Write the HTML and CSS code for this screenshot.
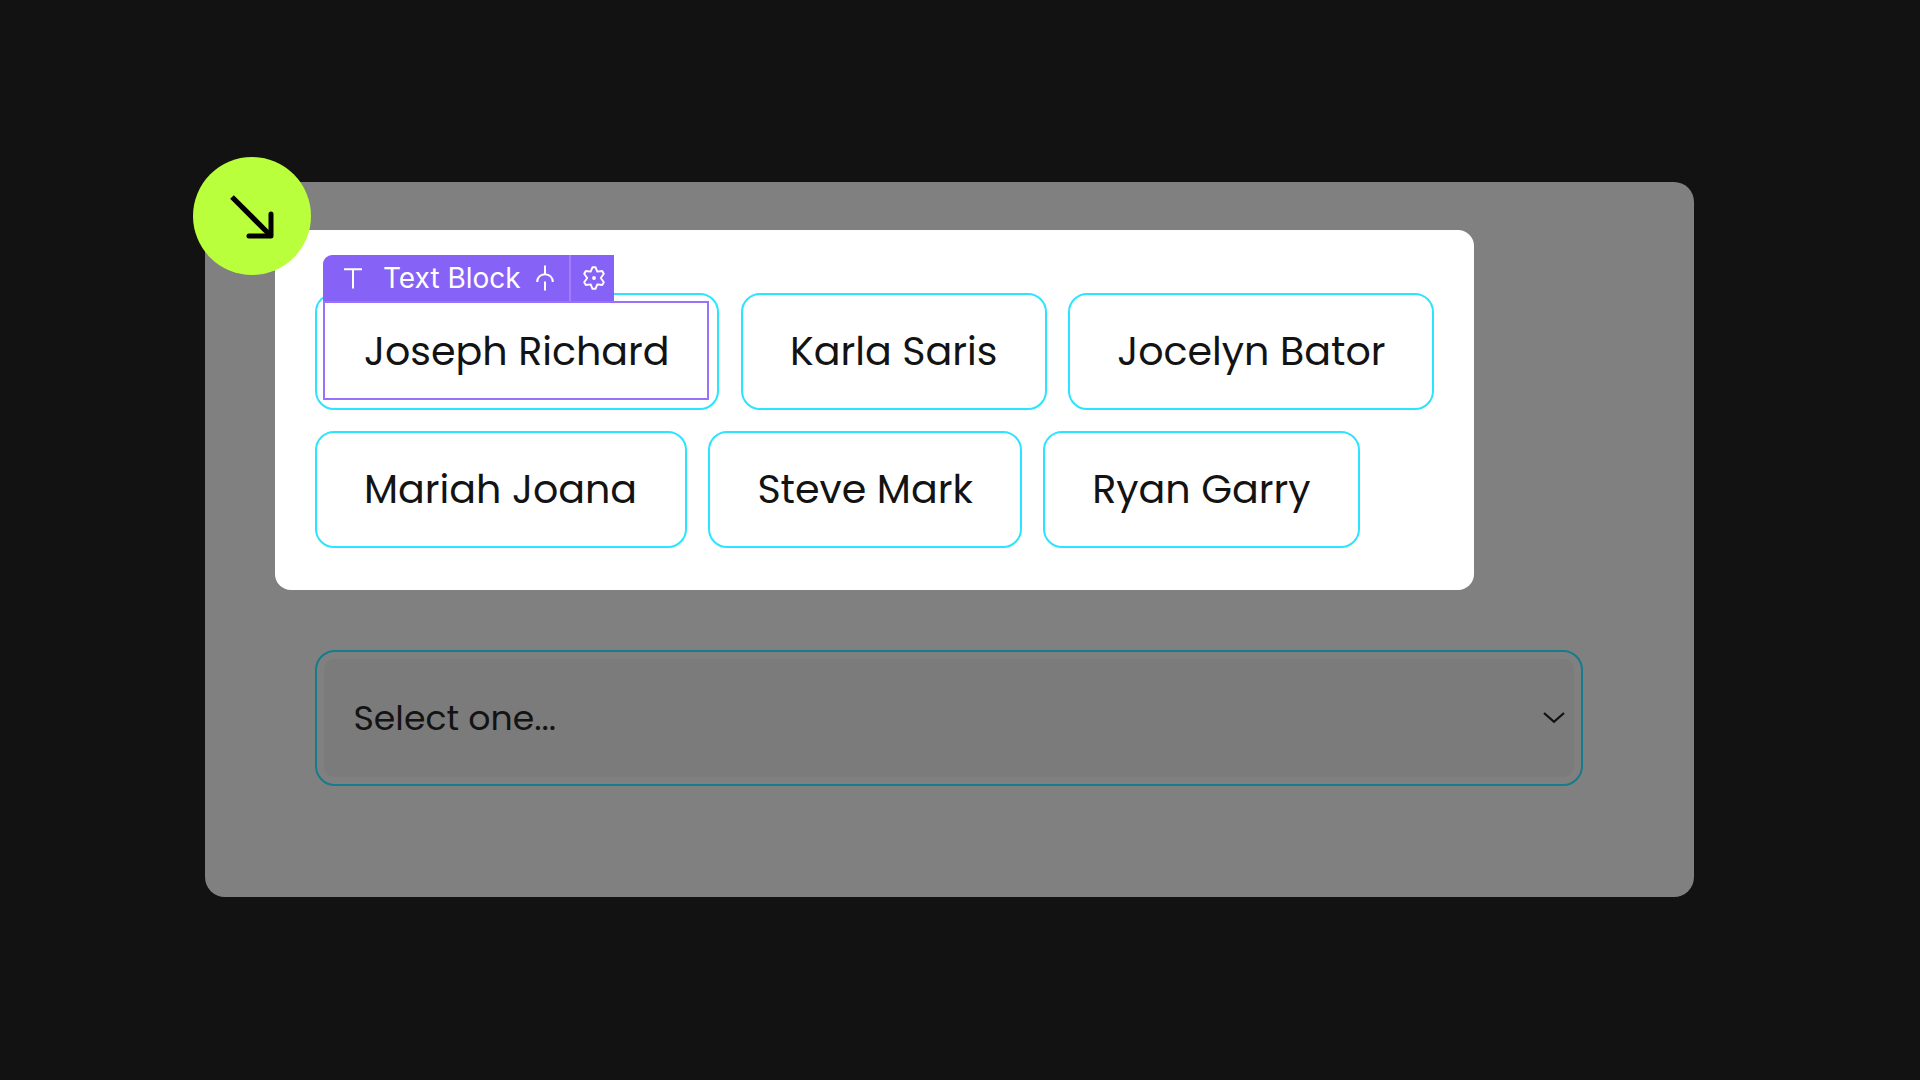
FILE: index.html
```html
<!DOCTYPE html>
<html lang="en">
<head>
  <meta charset="UTF-8">
  <title>Name Picker</title>
  <link rel="stylesheet" href="styles.css">
</head>
<body>
  <main class="panel">
    <!-- Corner badge -->
    <div class="badge">
      <svg viewBox="0 0 118 118" width="118" height="118" fill="none" stroke="#000">
        <path d="M39 40 L77 78" stroke-width="5.2"/>
        <path d="M56 79 H78 V57" stroke-width="5" stroke-linecap="round" stroke-linejoin="round"/>
      </svg>
    </div>

    <!-- Names -->
    <section class="card">
      <div class="chip chip-joseph">
        <div class="selection">
          <div class="tag">
            <div class="tag-label">
              <svg class="icon-t" viewBox="0 0 18 21" width="18" height="21" fill="none" stroke="#fff" stroke-width="2">
                <path d="M0 1.3 H18 M9 1.3 V20.5"/>
              </svg>
              <span>Text Block</span>
              <svg class="icon-link" viewBox="0 0 18 26" width="18" height="26" fill="none" stroke="#fff" stroke-width="2">
                <path d="M9 0.5 V9.5 M1.2 17 C1.2 12.5 4.5 9.2 9 9.2 C13.5 9.2 16.8 12.5 16.8 17 M9 16.5 V25.5"/>
              </svg>
            </div>
            <div class="tag-settings">
              <svg viewBox="0 0 22 24" width="22" height="24" fill="none" stroke="#fff" stroke-width="1.9" stroke-linejoin="round">
                <path d="M9.5 1.2 H12.5 L14.3 5.6 L19.2 5 L20.8 7.8 L17.8 12 L20.8 16.2 L19.2 19 L14.3 18.4 L12.5 22.8 H9.5 L7.7 18.4 L2.8 19 L1.2 16.2 L4.2 12 L1.2 7.8 L2.8 5 L7.7 5.6 Z"/>
                <circle cx="11" cy="12" r="1.9" fill="#fff" stroke="none"/>
              </svg>
            </div>
          </div>
          <span class="name">Joseph Richard</span>
        </div>
      </div>
      <div class="chip chip-karla"><span class="name">Karla Saris</span></div>
      <div class="chip chip-jocelyn"><span class="name">Jocelyn Bator</span></div>
      <div class="chip chip-mariah"><span class="name">Mariah Joana</span></div>
      <div class="chip chip-steve"><span class="name">Steve Mark</span></div>
      <div class="chip chip-ryan"><span class="name">Ryan Garry</span></div>
    </section>

    <!-- Dropdown -->
    <div class="select">
      <div class="select-field">
        <span class="select-text">Select one...</span>
        <svg viewBox="0 0 22 12" width="22" height="12" fill="none" stroke="#111" stroke-width="2.2">
          <path d="M1 1 L11 9.8 L21 1"/>
        </svg>
      </div>
    </div>
  </main>
</body>
</html>
```

FILE: styles.css
```css
/* Global Styles */
* {
  box-sizing: border-box;
}

body {
  margin: 0;
  height: 1080px;
  padding: 182px 0 0 205.4px;
  background-color: #121212;
  font-family: Poppins, Inter, sans-serif;
  color: #131313;
  overflow: hidden;
}

svg {
  display: block;
  flex-shrink: 0;
}

/* Dimmed panel */
.panel {
  position: relative;
  display: flex;
  flex-direction: column;
  gap: 60px;
  width: 1488.4px;
  height: 714.5px;
  padding: 48px 70px;
  border-radius: 20px;
  background-color: #808080;
}

.badge {
  position: absolute;
  top: -25px;
  left: -12.4px;
  width: 118px;
  height: 118px;
  border-radius: 50%;
  background-color: #b9ff3b;
}

/* Highlighted card with the names */
.card {
  display: flex;
  flex-wrap: wrap;
  align-content: flex-start;
  gap: 21.3px 21.6px;
  width: 1198.5px;
  height: 360px;
  padding: 62.7px 36px 0 39.6px;
  border-radius: 16px;
  background-color: #fff;
}

.chip {
  display: flex;
  align-items: center;
  height: 117px;
  padding-left: 47px;
  border: 2px solid #2ce4ff;
  border-radius: 19px;
}

.name {
  font-size: 39.6px;
  line-height: 60px;
  white-space: nowrap;
}

.chip-joseph {
  width: 404.5px;
  padding: 0 0 0 6px;
}

.chip-karla {
  width: 305.5px;
}

.chip-jocelyn {
  width: 366px;
}

.chip-mariah {
  width: 371.8px;
}

.chip-steve {
  width: 313.2px;
}

.chip-ryan {
  width: 316.6px;
}

/* Selected text block */
.selection {
  position: relative;
  display: flex;
  align-items: center;
  width: 386px;
  height: 99px;
  margin-bottom: 1px;
  padding: 1px 0 0 39px;
  border: 2px solid #9872fb;
}

.tag {
  position: absolute;
  top: -48px;
  left: -2px;
  display: flex;
  height: 46px;
  border-radius: 9px 0 0 0;
  background-color: #8762f6;
  font-family: Inter, sans-serif;
  font-size: 28px;
  color: #fff;
}

.tag-label {
  display: flex;
  align-items: center;
  width: 248px;
  padding-left: 21px;
  border-right: 2px solid #a27bff;
  white-space: nowrap;
}

.icon-t {
  margin-right: 21px;
}

.icon-link {
  margin-left: 15.5px;
}

.tag-settings {
  display: flex;
  align-items: center;
  width: 43px;
  padding-left: 12px;
}

/* Dropdown */
.select {
  width: 1268px;
  height: 136px;
  margin-left: 39.6px;
  padding: 7px;
  border: 2px solid #167b8a;
  border-radius: 20px;
}

.select-field {
  display: flex;
  align-items: center;
  justify-content: space-between;
  height: 118px;
  padding: 0 9px 0 29.5px;
  border-radius: 10px;
  background-color: #7b7b7b;
}

.select-text {
  font-size: 34.7px;
  line-height: 52px;
}
```
